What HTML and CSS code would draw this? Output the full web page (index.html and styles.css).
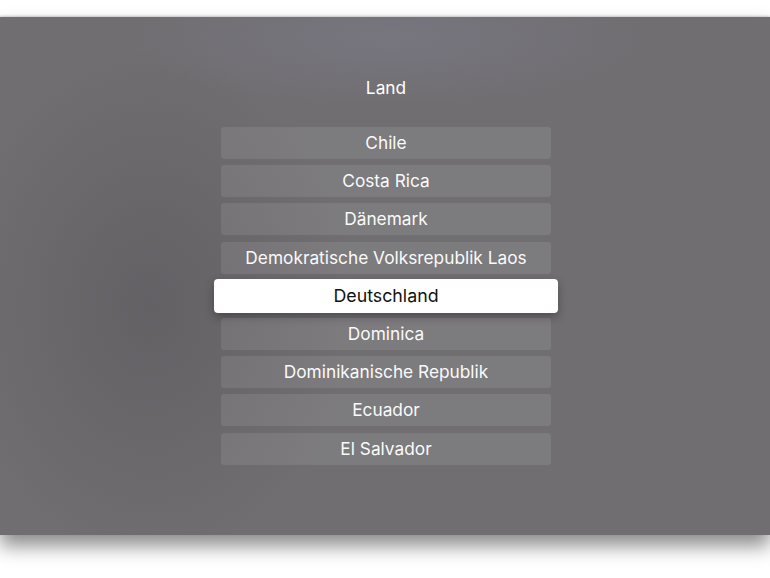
FILE: index.html
```html
<!DOCTYPE html>
<html lang="de">
<head>
<meta charset="utf-8">
<link rel="stylesheet" href="styles.css">
</head>
<body>
<div class="screen">
  <div class="title">Land</div>
  <ul class="list">
    <li class="item">Chile</li>
    <li class="item">Costa Rica</li>
    <li class="item">Dänemark</li>
    <li class="item">Demokratische Volksrepublik Laos</li>
    <li class="item focused">Deutschland</li>
    <li class="item">Dominica</li>
    <li class="item">Dominikanische Republik</li>
    <li class="item">Ecuador</li>
    <li class="item">El Salvador</li>
  </ul>
</div>
</body>
</html>
```
FILE: styles.css
```css
html, body {
  margin: 0;
  padding: 0;
  background: #ffffff;
}
body {
  width: 770px;
  height: 578px;
  overflow: hidden;
  font-family: "Inter", "Roboto", "Liberation Sans", sans-serif;
}
.screen {
  margin-top: 17px;
  height: 518px;
  padding-left: 2px;
  background:
    radial-gradient(ellipse 260px 70px at 390px 20px, rgba(125, 125, 140, 0.55), rgba(125, 125, 140, 0) 100%),
    radial-gradient(ellipse 200px 260px at 150px 290px, rgba(88, 86, 90, 0.55), rgba(88, 86, 90, 0) 100%),
    #706e71;
  box-shadow: 0 11px 18px rgba(0, 0, 0, 0.45), 0 -1px 2px rgba(0, 0, 0, 0.2);
  display: flex;
  flex-direction: column;
  align-items: center;
}
.title {
  margin-top: 60px;
  height: 22px;
  line-height: 22px;
  color: #ffffff;
  font-size: 17.3px;
}
.list {
  list-style: none;
  margin: 28px 0 0 0;
  padding: 0;
  display: flex;
  flex-direction: column;
  align-items: center;
  gap: 6.2px;
}
.item {
  width: 330px;
  height: 32px;
  line-height: 32px;
  text-align: center;
  font-size: 17.3px;
  color: #fafafa;
  background: rgba(255, 255, 255, 0.09);
  border-radius: 3px;
}
.item.focused {
  width: 344px;
  height: 34px;
  line-height: 34px;
  margin: -1px 0;
  font-size: 17.8px;
  color: #111111;
  background: #ffffff;
  border-radius: 4px;
  box-shadow: 0 4px 10px rgba(0, 0, 0, 0.3);
}
```
